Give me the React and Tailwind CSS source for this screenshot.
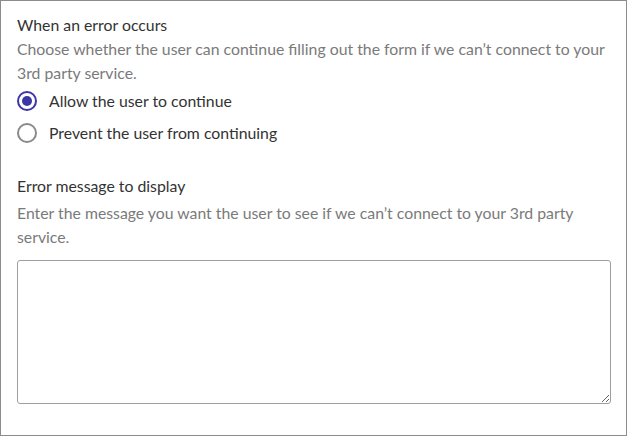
import { useState } from 'react';

export default function App() {
    const [choice, setChoice] = useState('allow');

    const options = [
        { value: 'allow', label: 'Allow the user to continue' },
        { value: 'prevent', label: 'Prevent the user from continuing' },
    ];

    return (
        <div className="w-[627px] h-[436px] border border-[#8c8c8c] bg-white px-4 pt-[12px] font-['Lato',sans-serif] text-[15.8px]">
            {/* Error behaviour */}
            <h2 className="text-[#333] leading-6">When an error occurs</h2>
            <p className="text-[#7a7a7a] leading-6 mt-0">
                Choose whether the user can continue filling out the form if we can’t connect to your 3rd party service.
            </p>

            <div className="mt-[6px] flex flex-col gap-[12px]">
                {options.map((opt) => {
                    const checked = choice === opt.value;
                    return (
                        <label key={opt.value} className="flex items-center gap-[12px] cursor-pointer h-[20px]">
                            <span
                                className={`w-5 h-5 rounded-full border-2 flex items-center justify-center shrink-0 ${checked ? 'border-[#3b36a6]' : 'border-[#8a8a8a]'}`}
                                onClick={() => setChoice(opt.value)}
                            >
                                {checked && <span className="w-[10px] h-[10px] rounded-full bg-[#3b36a6]" />}
                            </span>
                            <span className="text-[#333] leading-5">{opt.label}</span>
                        </label>
                    );
                })}
            </div>

            {/* Error message */}
            <h2 className="text-[#333] leading-6 mt-[31px]">Error message to display</h2>
            <p className="text-[#7a7a7a] leading-6 mt-[3px]">
                Enter the message you want the user to see if we can’t connect to your 3rd party service.
            </p>
            <textarea className="mt-[11px] w-[594px] h-[144px] border border-[#9e9e9e] rounded-[3px] outline-none p-2 block" />
        </div>
    );
}
